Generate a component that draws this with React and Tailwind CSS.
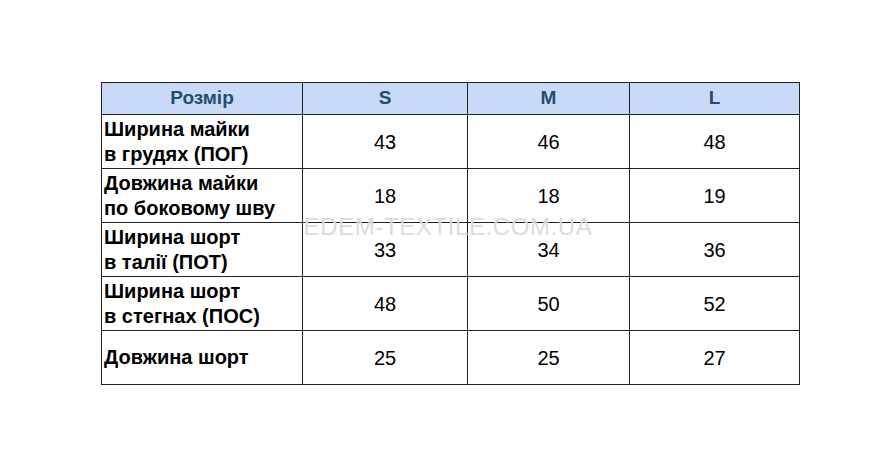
import React from 'react';

const rows = [
  { label: ['Ширина майки', 'в грудях (ПОГ)'], s: 43, m: 46, l: 48 },
  { label: ['Довжина майки', 'по боковому шву'], s: 18, m: 18, l: 19 },
  { label: ['Ширина шорт', 'в талії (ПОТ)'], s: 33, m: 34, l: 36 },
  { label: ['Ширина шорт', 'в стегнах (ПОС)'], s: 48, m: 50, l: 52 },
  { label: ['Довжина шорт'], s: 25, m: 25, l: 27 },
];

const App = () => {
  return (
    <div className="w-[895px] h-[453px] bg-white pt-[82px] pl-[101px] font-['Liberation_Sans',Arial,sans-serif]">
      <div className="relative w-[698px]">
        <table className="border-collapse table-fixed w-[698px] text-black">
          <colgroup>
            <col className="w-[201px]" />
            <col className="w-[165px]" />
            <col className="w-[162px]" />
            <col className="w-[170px]" />
          </colgroup>
          <thead className="bg-[#c9daf8]">
            <tr className="h-[32px]">
              <th className="border border-[#222] text-[19px] font-bold text-[#1f4e6e] text-center p-0">Розмір</th>
              <th className="border border-[#222] text-[19px] font-bold text-[#1f4e6e] text-center p-0">S</th>
              <th className="border border-[#222] text-[19px] font-bold text-[#1f4e6e] text-center p-0">M</th>
              <th className="border border-[#222] text-[19px] font-bold text-[#1f4e6e] text-center p-0">L</th>
            </tr>
          </thead>
          <tbody>
            {rows.map((row, index) => (
              <tr key={index} className="h-[54px]">
                <td className="border border-[#222] px-[2px] text-[20px] font-bold leading-[25px] align-middle whitespace-nowrap">
                  {row.label.map((line, i) => (
                    <div key={i}>{line}</div>
                  ))}
                </td>
                <td className="border border-[#222] text-center text-[20px] align-middle">{row.s}</td>
                <td className="border border-[#222] text-center text-[20px] align-middle">{row.m}</td>
                <td className="border border-[#222] text-center text-[20px] align-middle">{row.l}</td>
              </tr>
            ))}
          </tbody>
        </table>
        <div className="absolute left-[200px] top-[133px] w-[294px] whitespace-nowrap text-center text-[24px] leading-none text-[#dcdcdc] tracking-[0.6px] pointer-events-none">
          EDEM-TEXTILE.COM.UA
        </div>
      </div>
    </div>
  );
};

export default App;
